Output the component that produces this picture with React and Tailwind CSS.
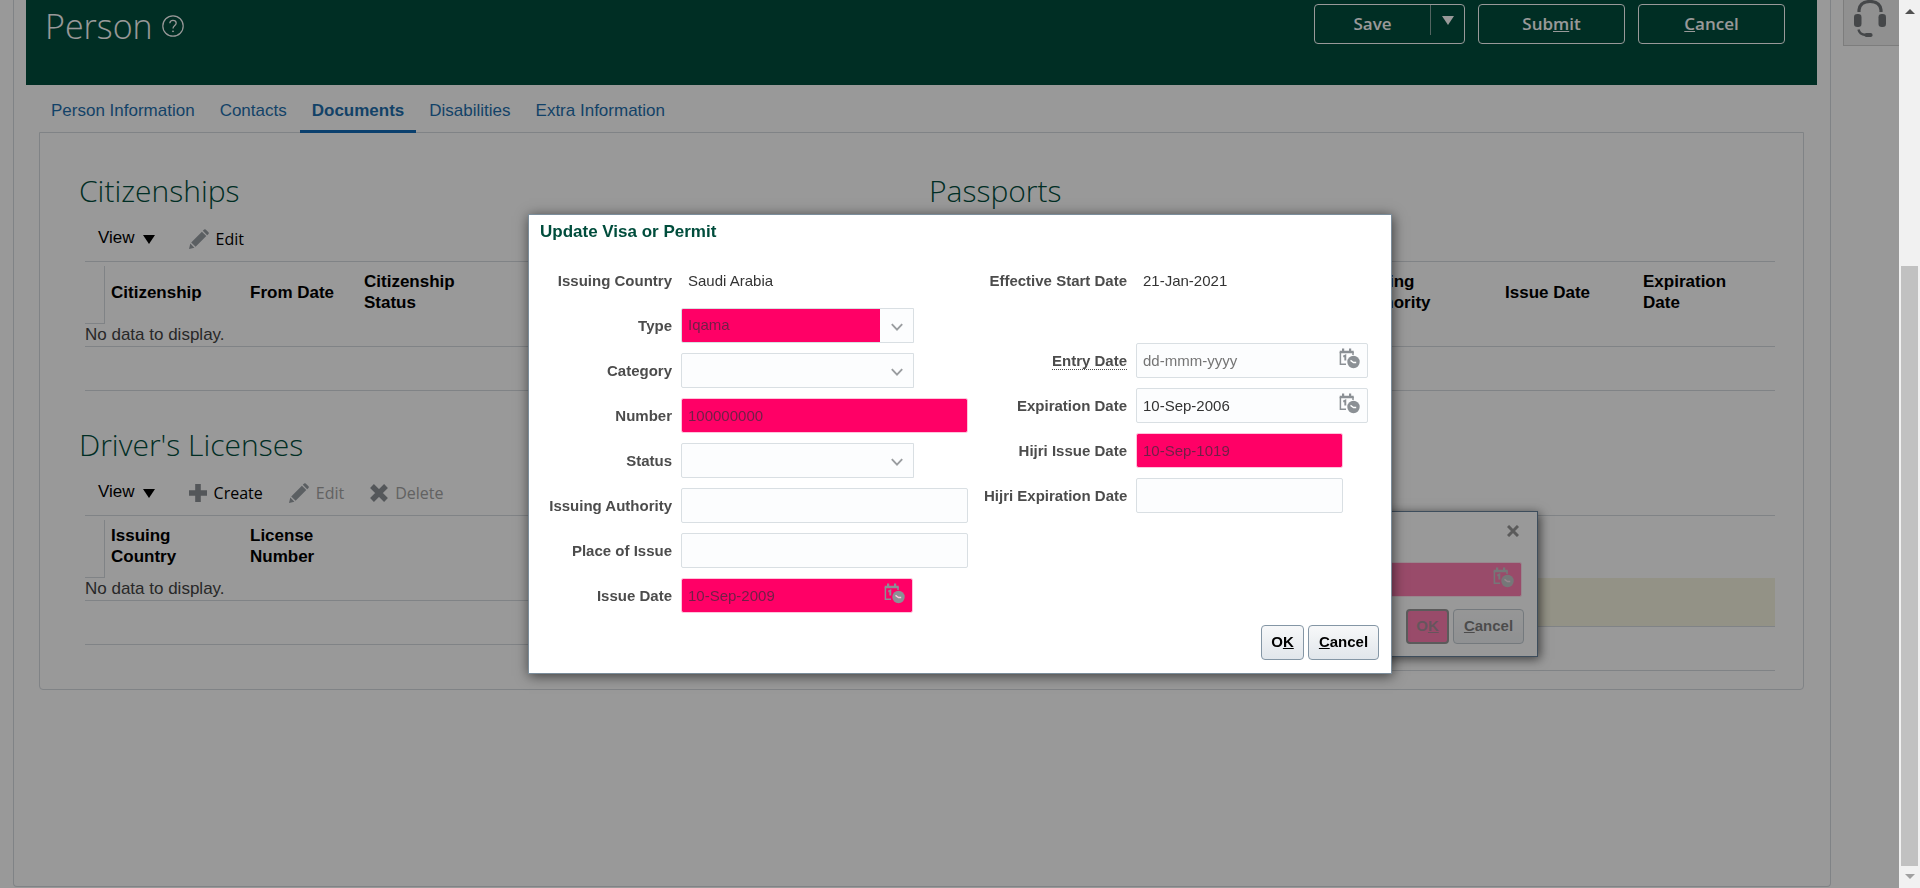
import React from "react";

const SEGOE = "font-['Open_Sans','Noto_Sans',sans-serif]";

function CalendarClock({ hand = "#fff" }) {
  return (
    <svg viewBox="0 0 21 21" className="size-[21px]" fill="none" aria-hidden="true">
      <path d="M7 16.2H1.4V4M14 4V7" stroke="#8b9095" strokeWidth="1.5" />
      <path d="M.7 2.8H14.7V5.2H.7zM3 .4H5.2V4H3zM10 .4H12.2V4H10z" fill="#8b9095" />
      <path d="M4.3 8.6L6.3 7.5V12.6" stroke="#8b9095" strokeWidth="1.9" />
      <circle cx="14.5" cy="14" r="6.2" fill="#8b9095" />
      <path d="M11.5 12.4L14.5 14.5H17.2" stroke={hand} strokeWidth="1.3" />
    </svg>
  );
}

function Chevron() {
  return (
    <svg viewBox="0 0 12 8" className="h-2 w-3" fill="none" aria-hidden="true">
      <path d="M.8 1.2L6 6.6L11.2 1.2" stroke="#9a9da0" strokeWidth="1.9" />
    </svg>
  );
}

function Triangle() {
  return (
    <svg viewBox="0 0 12 9" className="h-[9px] w-3" aria-hidden="true">
      <path d="M0 0H12L6 9z" fill="currentColor" />
    </svg>
  );
}

function Pencil() {
  return (
    <svg viewBox="0 0 20 20" className="size-5" fill="#989ea4" aria-hidden="true">
      <path d="M0 20L1.3 14.6L5.4 18.7zM2.2 13.4L12.9 2.7L17.3 7.1L6.6 17.8zM13.8 1.8L15.1.5Q15.9-.2 16.7.5L19.5 3.3Q20.2 4.1 19.5 4.9L18.2 6.2z" />
    </svg>
  );
}

function Plus() {
  return (
    <svg viewBox="0 0 18 18" className="size-[18px]" fill="#8c9196" aria-hidden="true">
      <path d="M6.200 0h5.600v6.200H18v5.600h-6.200V18H6.200v-6.200H0V6.200h6.200z" />
    </svg>
  );
}

function Cross() {
  return (
    <svg viewBox="0 0 18 18" className="size-[18px]" fill="none" aria-hidden="true">
      <path d="M2 2L16 16M16 2L2 16" stroke="#8c9196" strokeWidth="5.4" />
    </svg>
  );
}

function Headset() {
  return (
    <svg viewBox="0 0 34 38" className="h-[38px] w-[34px]" fill="none" aria-hidden="true">
      <path d="M6 12V10Q7 1.5 17 1.5T28 10V12" stroke="#73777b" strokeWidth="3.2" />
      <rect x="1" y="14" width="7.5" height="13" rx="3.2" fill="#73777b" />
      <rect x="25.5" y="14" width="7.5" height="13" rx="3.2" fill="#73777b" />
      <path d="M5.5 29.5Q6.5 34.5 12.5 35" stroke="#73777b" strokeWidth="2.4" />
      <rect x="11.5" y="33" width="8" height="4" rx="1.8" fill="#73777b" />
    </svg>
  );
}

function ToolButton({ icon, children, disabled }) {
  return (
    <button
      type="button"
      disabled={disabled}
      className={`flex items-center gap-[7px] text-[16px] font-medium leading-6 ${SEGOE} ${disabled ? "text-[#a3a3a3]" : "text-black"}`}
    >
      {icon}
      {children}
    </button>
  );
}

function Section({ title, columns, emptyText, selected, children }) {
  return (
    <section className="h-[254px]">
      <h2 className={`text-[30px] font-light leading-[44px] text-[#004d3c] ${SEGOE}`}>{title}</h2>
      <div className="mt-1 flex h-[44px] items-center gap-[26px] pl-[19px]">
        <button type="button" className="mr-2 flex items-center gap-2 pb-[2px] text-[17px] leading-5 text-black">
          View
          <span className="pt-[3px]">
            <Triangle />
          </span>
        </button>
        {children}
      </div>
      <table className="ml-[6px] mr-1 w-[calc(100%-10px)] table-fixed border-collapse">
        <thead>
          <tr className="h-[62px] border-t border-[#d5dadf]">
            <th className="w-5 p-0 pt-1">
              <div className="h-[58px] border-b border-r border-[#d5dadf]" />
            </th>
            {columns.map(([name, width]) => (
              <th
                key={name}
                className={`${width} whitespace-pre-line p-0 pb-0.5 pl-[6px] text-left align-middle text-[17px] font-bold leading-[21px] text-black`}
              >
                {name}
              </th>
            ))}
          </tr>
        </thead>
        <tbody>
          <tr className={`${selected ? "h-[48px] bg-[#f6f4e0]" : "h-[22px]"} border-b border-[#d5dadf]`}>
            <td colSpan={columns.length + 1} className="p-0 text-[17px] leading-[22px] text-[#444]">
              {emptyText}
            </td>
          </tr>
          <tr className="h-[44px] border-b border-[#d5dadf]">
            <td colSpan={columns.length + 1} className="p-0" />
          </tr>
        </tbody>
      </table>
    </section>
  );
}

const label = "whitespace-nowrap text-right text-[15px] font-bold leading-5 text-[#4c4c4c]";
const control = "h-[35px] border px-[6px] text-[15px] outline-none";
const plain = "border-[#d9dfe3] bg-[#fcfdfe] text-[#333]";
const pink = "border-[#ffc4dc] bg-[#ff0066] bg-clip-padding text-[#701f47]";
const splitPink =
  "border-[#d9dfe3] bg-[linear-gradient(to_right,#ff0066_198px,#fcfdfe_198px)] text-[#701f47]";

function Field({ id, name, children, dotted }) {
  return (
    <div className="flex h-[45px] items-center gap-[9px]">
      <label htmlFor={id} className={`${label} w-[143px] shrink-0`}>
        <span className={dotted ? "border-b border-dotted border-[#4c4c4c]" : ""}>{name}</span>
      </label>
      {children}
    </div>
  );
}

function TextBox({ id, value, width, filled }) {
  return (
    <input
      id={id}
      type="text"
      defaultValue={value}
      className={`${control} ${filled ? pink : plain} ${width} rounded-[2px]`}
    />
  );
}

function DateBox({ id, value, placeholder, filled }) {
  return (
    <div className="relative">
      <input
        id={id}
        type="text"
        defaultValue={value}
        placeholder={placeholder}
        className={`${control} ${filled ? pink : plain} w-[232px] rounded-[2px] placeholder:text-[#757575]`}
      />
      <button type="button" aria-label="Select date" className="absolute right-2 top-[5px]">
        <CalendarClock hand={filled ? "#ffc4dc" : "#fff"} />
      </button>
    </div>
  );
}

function Drop({ id, value, filled }) {
  return (
    <div className="relative">
      <select
        id={id}
        defaultValue={value}
        className={`${control} ${filled ? splitPink : plain} w-[233px] appearance-none rounded-l-[2px]`}
      >
        <option>{value}</option>
      </select>
      <span className="pointer-events-none absolute right-[11px] top-[15px]">
        <Chevron />
      </span>
    </div>
  );
}

const dialogButton =
  "h-[35px] rounded-[4px] border border-[#8496a5] bg-linear-to-b from-[#f7f8f9] to-[#e1e6eb] text-[15px] font-bold text-black";

function DateDialog() {
  return (
    <div
      role="dialog"
      aria-label="Effective date"
      className="absolute right-[361px] top-[511px] w-[420px] border border-[#67819a] bg-white shadow-[2px_2px_10px_rgba(0,0,0,0.6)]"
    >
      <div className="flex flex-col items-end px-[13px] pb-3 opacity-50">
        <button type="button" aria-label="Close" className="mr-[4px] mt-3 p-px">
          <svg viewBox="0 0 12 12" className="size-3" fill="none" aria-hidden="true">
            <path d="M1 1L11 11M11 1L1 11" stroke="#333" strokeWidth="3" />
          </svg>
        </button>
        <div className="mr-[2px] mt-6">
          <DateBox id="effective-date" value="" filled />
        </div>
        <div className="mt-3 flex gap-1">
          <button
            type="button"
            className="h-[35px] w-[43px] rounded-[4px] border-2 border-[#333] bg-[#ff0066] text-[15px] font-bold text-[#5a2038]"
          >
            O<span className="underline">K</span>
          </button>
          <button type="button" className={`${dialogButton} w-[71px]`}>
            <span className="underline">C</span>ancel
          </button>
        </div>
      </div>
    </div>
  );
}

function VisaDialog() {
  return (
    <div className="pointer-events-none fixed inset-0 grid place-items-center">
      <form
        role="dialog"
        aria-labelledby="visa-title"
        className="pointer-events-auto border border-[#7b8d9b] bg-white pb-[13px] pr-3 shadow-[1px_2px_12px_rgba(0,0,0,0.6)]"
      >
        <h2 id="visa-title" className="h-[43px] pl-[11px] pt-[7px] text-[17px] font-bold leading-5 text-[#004d3c]">
          Update Visa or Permit
        </h2>
        <div className="flex gap-4">
          <div className="w-[439px]">
            <Field id="country" name="Issuing Country">
              <output id="country" className="px-[7px] text-[15px] leading-5 text-[#333]">Saudi Arabia</output>
            </Field>
            <Field id="type" name="Type"><Drop id="type" value="Iqama" filled /></Field>
            <Field id="category" name="Category"><Drop id="category" value="" /></Field>
            <Field id="number" name="Number"><TextBox id="number" value="100000000" width="w-[287px]" filled /></Field>
            <Field id="status" name="Status"><Drop id="status" value="" /></Field>
            <Field id="authority" name="Issuing Authority"><TextBox id="authority" width="w-[287px]" /></Field>
            <Field id="place" name="Place of Issue"><TextBox id="place" width="w-[287px]" /></Field>
            <Field id="issue-date" name="Issue Date"><DateBox id="issue-date" value="10-Sep-2009" filled /></Field>
          </div>
          <div className="w-[395px]">
            <Field id="start" name="Effective Start Date">
              <output id="start" className="px-[7px] text-[15px] leading-5 text-[#333]">21-Jan-2021</output>
            </Field>
            <div className="mt-[35px]">
              <Field id="entry" name="Entry Date" dotted>
                <DateBox id="entry" placeholder="dd-mmm-yyyy" />
              </Field>
              <Field id="expiration" name="Expiration Date"><DateBox id="expiration" value="10-Sep-2006" /></Field>
              <Field id="hijri-issue" name="Hijri Issue Date">
                <TextBox id="hijri-issue" value="10-Sep-1019" width="w-[207px]" filled />
              </Field>
              <Field id="hijri-expiration" name="Hijri Expiration Date">
                <TextBox id="hijri-expiration" width="w-[207px]" />
              </Field>
            </div>
          </div>
        </div>
        <div className="mt-[7px] flex justify-end gap-1">
          <button type="button" className={`${dialogButton} w-[43px]`}>
            O<span className="underline">K</span>
          </button>
          <button type="button" className={`${dialogButton} w-[71px]`}>
            <span className="underline">C</span>ancel
          </button>
        </div>
      </form>
    </div>
  );
}

function ScrollTrack() {
  return (
    <div className="flex w-[21px] shrink-0 flex-col items-center bg-[#f1f1f1]" aria-hidden="true">
      <svg viewBox="0 0 10 5" className="mt-[9px] h-[5px] w-[10px]"><path d="M0 5L5 0L10 5z" fill="#505050" /></svg>
      <div className="mt-2 flex min-h-0 w-[17px] flex-1 flex-col">
        <div className="grow-[244]" />
        <div className="grow-[600] bg-[#c1c1c1]" />
      </div>
      <svg viewBox="0 0 10 5" className="mb-[9px] mt-2 h-[5px] w-[10px]"><path d="M0 0L5 5L10 0z" fill="#a0a0a0" /></svg>
    </div>
  );
}

export default function App() {
  return (
    <div className="flex h-screen overflow-hidden bg-white font-['Liberation_Sans',Arial,sans-serif]">
      <div className="relative flex min-w-0 flex-1">
        <main className="mb-px ml-[13px] mr-3 flex-1 rounded-b border-x border-b border-[#d5dadf] pl-3 pr-[13px]">
          <header className="flex h-[85px] items-start justify-between bg-[#004d3c] pl-[19px] pr-8 text-white">
            <div className="flex items-center gap-[9px]">
              <h1 className={`text-[34px] font-light leading-[52px] ${SEGOE}`}>Person</h1>
              <button type="button" aria-label="Help">
                <svg viewBox="0 0 22 22" className="size-[22px]" fill="none" stroke="#fff" aria-hidden="true">
                  <circle cx="11" cy="11" r="10.2" strokeWidth="1.2" />
                  <path d="M7.8 8.3Q8 5.3 11 5.3T14.2 8C14.2 10.4 11 10.6 11 13.6" strokeWidth="1.3" />
                  <circle cx="11" cy="16.3" r=".5" fill="#fff" />
                </svg>
              </button>
            </div>
            <div className={`flex gap-[13px] pt-1 text-[17px] font-semibold ${SEGOE}`}>
              <div className="flex h-10 w-[151px] rounded-[4px] border border-white">
                <button type="button" className="flex-1">
                  Save
                </button>
                <button
                  type="button"
                  aria-label="More save options"
                  className="mb-2 flex w-[34px] items-center justify-center border-l border-[#8aa9a2]"
                >
                  <Triangle />
                </button>
              </div>
              <button type="button" className="h-10 w-[147px] rounded-[4px] border border-white">
                Sub<span className="underline">m</span>it
              </button>
              <button type="button" className="h-10 w-[147px] rounded-[4px] border border-white">
                <span className="underline">C</span>ancel
              </button>
            </div>
          </header>

          <nav className="flex h-12 gap-[1px] pl-[13px] pt-2 text-[17px] leading-9 text-[#1f6fae]">
            <a href="#person" className="px-3">Person Information</a>
            <a href="#contacts" className="px-3">Contacts</a>
            <a href="#documents" className="border-b-[3px] border-[#116bb7] px-3 font-bold">Documents</a>
            <a href="#disabilities" className="px-3">Disabilities</a>
            <a href="#extra" className="px-3">Extra Information</a>
          </nav>

          <div className="-mt-px ml-[13px] mr-[13px] grid h-[558px] grid-cols-2 content-start rounded-b border border-[#d5dadf] pl-[39px] pr-6 pt-9">
            <Section
              title="Citizenships"
              emptyText="No data to display."
              columns={[["Citizenship", "w-[139px]"], ["From Date", "w-[114px]"], ["Citizenship\nStatus", ""]]}
            >
              <ToolButton icon={<Pencil />}>Edit</ToolButton>
            </Section>
            <Section
              title="Passports"
              columns={[["Number", ""], ["Issuing\nAuthority", "w-[150px]"], ["Issue Date", "w-[138px]"], ["Expiration\nDate", "w-[138px]"]]}
            />
            <Section
              title="Driver's Licenses"
              emptyText="No data to display."
              columns={[["Issuing\nCountry", "w-[139px]"], ["License\nNumber", ""]]}
            >
              <ToolButton icon={<Plus />}>Create</ToolButton>
              <ToolButton icon={<Pencil />} disabled>Edit</ToolButton>
              <ToolButton icon={<Cross />} disabled>Delete</ToolButton>
            </Section>
            <Section title="Visas and Permits" columns={[["Type", ""]]} selected />
          </div>
        </main>
        <aside className="w-14 shrink-0">
          <button
            type="button"
            aria-label="Support"
            className="flex h-[46px] w-full justify-center border-b border-l border-[#d0d0d0] bg-[#f0f0f0] pr-1"
          >
            <Headset />
          </button>
        </aside>
        <DateDialog />
        <div className="absolute inset-0 bg-black/40" />
      </div>
      <ScrollTrack />
      <VisaDialog />
    </div>
  );
}
